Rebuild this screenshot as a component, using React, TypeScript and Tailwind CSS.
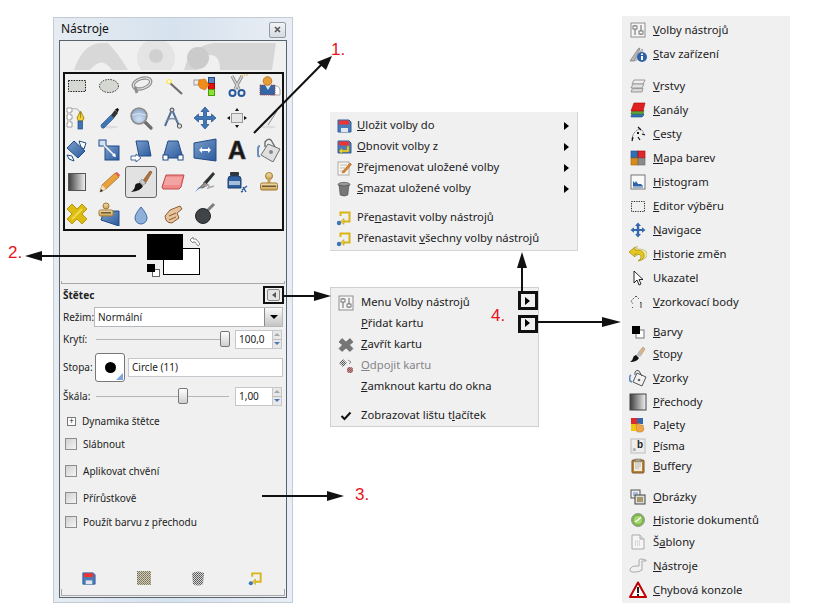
import type { ReactNode } from 'react'

function Ico({ s = 24, vb = 24, children }: { s?: number; vb?: number; children: ReactNode }) {
  return (
    <svg width={s} height={s} viewBox={`0 0 ${vb} ${vb}`} className="shrink-0">
      {children}
    </svg>
  )
}

// shared gradients and dither fills
function Defs() {
  return (
    <svg width="0" height="0" className="absolute">
      <defs>
        <linearGradient id="blue" x1="0" y1="0" x2="1" y2="1">
          <stop offset="0" stopColor="#7c9fcb" />
          <stop offset="1" stopColor="#2a5a9e" />
        </linearGradient>
        <linearGradient id="blend" x1="0" y1="0" x2="1" y2="0">
          <stop offset="0" stopColor="#3c3c3c" />
          <stop offset="1" stopColor="#f4f4f4" />
        </linearGradient>
        <linearGradient id="tan" x1="0" y1="0" x2="0" y2="1">
          <stop offset="0" stopColor="#f3e1ae" />
          <stop offset="1" stopColor="#c9a25a" />
        </linearGradient>
        <radialGradient id="lens" cx="0.5" cy="0.7" r="0.7">
          <stop offset="0" stopColor="#cfe0f5" />
          <stop offset="1" stopColor="#8fa9cb" />
        </radialGradient>
        <pattern id="dither" width="2" height="2" patternUnits="userSpaceOnUse">
          <rect width="2" height="2" fill="#d8d8d8" />
          <rect width="1" height="1" fill="#555" />
          <rect x="1" y="1" width="1" height="1" fill="#666" />
        </pattern>
        <pattern id="dither2" width="2" height="2" patternUnits="userSpaceOnUse">
          <rect width="2" height="2" fill="#d7cfa8" />
          <rect width="1" height="1" fill="#6b6b6b" />
          <rect x="1" y="1" width="1" height="1" fill="#8a8078" />
        </pattern>
      </defs>
    </svg>
  )
}

const TEXT_TOOL = 19

const toolIcons: ReactNode[] = [
  <rect x="3.5" y="6.5" width="17" height="11" fill="#d4d7d2" stroke="#111" strokeDasharray="1.4 1.2" />,
  <ellipse cx="12" cy="12" rx="9.5" ry="6.5" fill="#d4d7d2" stroke="#222" strokeDasharray="1.4 1.2" />,
  <g fill="none">
    <ellipse cx="13" cy="9.5" rx="9" ry="5" transform="rotate(-18 13 9.5)" stroke="#8d8d8d" strokeWidth="3.4" />
    <ellipse cx="13" cy="9.5" rx="9" ry="5" transform="rotate(-18 13 9.5)" stroke="#e4e4e4" strokeWidth="1.2" />
    <path d="M6 13l2 6" stroke="#8d8d8d" strokeWidth="2.8" />
  </g>,
  <g>
    <path d="M9 9l12 11" stroke="#6d6d6d" strokeWidth="2.2" />
    <circle cx="8" cy="7.5" r="2.6" fill="#fce94f" />
    <circle cx="8" cy="7.5" r="1.2" fill="#fff" />
  </g>,
  <g>
    <rect x="15.5" y="3.5" width="6" height="6" fill="#5a86c0" stroke="#204a87" />
    <rect x="15.5" y="9.5" width="6" height="6" fill="#e01010" stroke="#a40000" />
    <rect x="15.5" y="15.5" width="6" height="6" fill="#8ae234" stroke="#4e9a06" />
    <rect x="1" y="6" width="6" height="5" fill="#eee" stroke="#999" />
    <path d="M6 6l6-1 4 6-4 5-5-2-2-4z" fill="#f08c1a" stroke="#c96a08" strokeWidth=".6" />
  </g>,
  <g fill="none">
    <path d="M7 2l7 13M17 2l-7 13" stroke="#8f8f8f" strokeWidth="3.2" />
    <path d="M7 2l7 13M17 2l-7 13" stroke="#dadada" strokeWidth="1.2" />
    <path d="M15 2q3-1 8-1" stroke="#d69a2c" strokeDasharray="1.2 1" />
    <circle cx="7.5" cy="19" r="3" stroke="#2a5a9e" strokeWidth="2" />
    <circle cx="16.5" cy="19" r="3" stroke="#2a5a9e" strokeWidth="2" />
  </g>,
  <g>
    <path d="M14 12h6q3 1 3 4v5H14z" fill="#fff" stroke="#aaa" />
    <rect x="3" y="11" width="15" height="10" fill="#3465a4" stroke="#a44" strokeDasharray="1.2 1" />
    <path d="M8 11l3 5 3-5z" fill="#dfe7f2" />
    <circle cx="10.5" cy="7" r="4.3" fill="#e79c3a" stroke="#b97a1f" />
  </g>,
  <g fill="none">
    <path d="M2 2h5v4H5v3h2v4H5v3h2v5H2v-4h1v-4H2V9h1V6H2z" fill="#fff" stroke="#8a8a8a" strokeWidth=".8" />
    <path d="M6 3q7-2 9 4" stroke="#b5b5b5" strokeWidth="1.2" />
    <path d="M15.5 5l3.5 7-1.5 3h-4L12 12z" fill="#f2d43a" stroke="#a98a10" />
    <rect x="13" y="15" width="4.5" height="8" fill="#3d75b8" stroke="#204a87" strokeWidth=".7" />
    <path d="M15.5 6v6" stroke="#6b5a10" strokeWidth=".6" />
  </g>,
  <g>
    <ellipse cx="13" cy="21" rx="8" ry="1.4" fill="#ddd" />
    <path d="M4 19l10-10 3 3-10 10q-3 1-3-3" fill="#3f76b6" stroke="#204a87" strokeWidth=".6" />
    <path d="M14 9l4-5 3 3-4 5z" fill="#2e3436" />
    <path d="M18 3.5l2.5-1.5 1.5 1.5-1.5 3z" fill="#111" />
  </g>,
  <g>
    <path d="M16 16l6 6" stroke="#6d6d6d" strokeWidth="3.2" strokeLinecap="round" />
    <circle cx="10" cy="10" r="7.8" fill="url(#lens)" stroke="#8e8e8e" strokeWidth="1.8" />
    <path d="M3 9q7-3 14 0" stroke="#e6eef9" strokeWidth=".8" fill="none" />
  </g>,
  <g fill="none">
    <circle cx="11" cy="4" r="2" fill="#c9d4e2" stroke="#444" />
    <path d="M10 6L4 20M12 6l6 14" stroke="#4f6e98" strokeWidth="2" />
    <path d="M5 15q6-5 12 0" stroke="#7c8ba0" strokeWidth="1.5" />
    <circle cx="18.5" cy="20" r="2.2" fill="#ddd" stroke="#555" />
  </g>,
  <path d="M12 1l4 4.5h-2.5V10.5H18.5V8L23 12l-4.5 4V13.5H13.500V18.5H16L12 23l-4-4.5h2.5V13.5H5.5V16L1 12l4.5-4v2.5H10.5V5.5H8z" fill="#3f76b6" stroke="#204a87" strokeWidth=".7" />,
  <g fill="#111">
    <rect x="6.5" y="7.5" width="11" height="9" fill="#e6e6e6" stroke="#9a9a9a" />
    <path d="M12 2l2 3h-4zM12 22l2-3h-4zM2 12l3-2v4zM22 12l-3-2v4z" />
  </g>,
  <g fill="none">
    <ellipse cx="11" cy="21" rx="8" ry="1.5" fill="#ddd" />
    <path d="M4 20L20 5l-9 14" fill="#eee" stroke="#8a8a8a" />
  </g>,
  <g>
    <path d="M2 10l7-7 11 10-7 7z" fill="url(#blue)" stroke="#204a87" />
    <path d="M14 3l7 2-2 6-3-2zM2 17l5 1 2 5-5-2z" fill="#fff" stroke="#204a87" />
  </g>,
  <g>
    <rect x="8" y="8" width="14" height="14" fill="url(#blue)" stroke="#204a87" />
    <rect x="2" y="2" width="7" height="6" fill="#d5e1f0" stroke="#204a87" />
    <path d="M7 7l11 11" stroke="#fff" strokeWidth="1.5" />
    <path d="M19 19l-1-4-3 3z" fill="#fff" />
  </g>,
  <g>
    <path d="M7 3h12l3 15H10z" fill="url(#blue)" stroke="#204a87" />
    <path d="M2 18h5v-2l5 4-5 4v-2H2z" fill="#fff" stroke="#204a87" strokeWidth=".8" />
  </g>,
  <g>
    <path d="M7 3h10l5 17H2z" fill="url(#blue)" stroke="#204a87" />
    <rect x="2" y="17" width="5" height="5" fill="#fff" stroke="#204a87" />
    <rect x="17" y="17" width="5" height="5" fill="#fff" stroke="#204a87" />
  </g>,
  <g>
    <path d="M1 5l22-4v22L1 20z" fill="url(#blue)" stroke="#204a87" />
    <path d="M6 12l3-3v2h6V9l3 3-3 3v-2H9v2z" fill="#fff" />
  </g>,
  <span className="font-['Liberation_Sans',sans-serif] text-[25px] font-bold leading-[32px] text-[#151515] [-webkit-text-stroke:0.7px_#444]">A</span>,
  <g>
    <path d="M3 8q-2 0-2 3v6q0 2 2 1" fill="none" stroke="#6b8ebd" strokeWidth="2" />
    <path d="M11 6l12 5-7 13-12-7z" fill="#e0e0e0" stroke="#6d6d6d" />
    <path d="M8 9V4q3-4 6-2l4 7" fill="none" stroke="#6d6d6d" strokeWidth="1.4" />
    <circle cx="14" cy="14" r="2" fill="#888" />
  </g>,
  <rect x="3.5" y="3.5" width="17" height="17" fill="url(#blend)" stroke="#555" />,
  <g>
    <path d="M3 22l2-7L18 3l4 4L9 19z" fill="#e9a13b" stroke="#9a6a1c" strokeWidth=".7" />
    <path d="M18 3l2-1 3 3-1 2z" fill="#e25a5a" />
    <path d="M3 22l2-7 4 4z" fill="#f3dfbf" />
    <path d="M3 22l1-3 2 2z" fill="#222" />
  </g>,
  <g>
    <path d="M13 12L21 1l2 1-7 12z" fill="#b4703a" stroke="#7a4a1e" strokeWidth=".6" />
    <path d="M10 12l3-3 4 4-3 2z" fill="#c9c9c9" stroke="#777" strokeWidth=".5" />
    <path d="M11 13l3 3q-2 5-12 6 4-3 4-6t5-3z" fill="#151515" />
  </g>,
  <g>
    <path d="M5 5h18l-3 12-2 2H2l-1-2z" fill="#ef8a8a" stroke="#c44848" />
    <path d="M5 7h16l-2 8H3z" fill="#f4a3a3" />
  </g>,
  <g>
    <path d="M10 13L20 2l2 2-9 11z" fill="#2e3436" />
    <path d="M6 18l6-6 3 3-5 3z" fill="#8d8d8d" stroke="#444" strokeWidth=".5" />
    <path d="M12 16q6-3 3 2l6-2" fill="none" stroke="#aaa" strokeWidth="1.4" />
    <path d="M2 22l4-5 1 1z" fill="#4d86c6" />
  </g>,
  <g>
    <rect x="5" y="2" width="9" height="4" rx="1" fill="#30363a" />
    <path d="M3 9q0-3 3-3h7q3 0 3 3v9H3z" fill="#2f5f9e" stroke="#1d3d6e" />
    <rect x="4" y="11" width="11" height="4" fill="#a8bfdb" />
    <path d="M17 20l5-4M18 17l3 5M16 22l2-1" stroke="#2f5f9e" strokeWidth="1.4" />
  </g>,
  <g>
    <circle cx="12" cy="6" r="3.5" fill="url(#tan)" stroke="#a37a2f" />
    <rect x="10.5" y="9" width="3" height="4" fill="#c9a25a" />
    <rect x="3.5" y="13" width="17" height="7" rx="1.5" fill="url(#tan)" stroke="#a37a2f" />
    <rect x="5" y="15.5" width="14" height="1.5" fill="#6e5a35" />
  </g>,
  <g>
    <path d="M7 2l5 5 5-5 5 5-5 5 5 5-5 5-5-5-5 5-5-5 5-5-5-5z" fill="#dcbc10" stroke="#b9960b" />
    <path d="M7 17L17 7" stroke="#f0d94e" strokeWidth="2" />
  </g>,
  <g>
    <path d="M7 9h15v15L4 18z" fill="url(#blue)" stroke="#204a87" />
    <circle cx="9" cy="4" r="3" fill="url(#tan)" stroke="#a37a2f" />
    <rect x="2" y="8" width="14" height="6" rx="1.5" fill="url(#tan)" stroke="#a37a2f" />
    <rect x="4" y="10" width="10" height="1.5" fill="#6e5a35" />
  </g>,
  <path d="M12 5q6 7 6 11a6 6 0 0 1-12 0q0-4 6-11z" fill="#8fb0d8" stroke="#3c6aa8" />,
  <g>
    <path d="M9 8l10-4 2 3-5 4 2 5-7 5q-5 0-6-3l-1-4z" fill="#e6c39c" stroke="#8f5a34" />
    <path d="M8 14l7-3M8 18l7-3" stroke="#8f5a34" />
  </g>,
  <g>
    <path d="M13 10L21 2" stroke="#7e7e7e" strokeWidth="3" />
    <circle cx="10" cy="14" r="7.5" fill="#3f4447" stroke="#23282b" />
  </g>,
]

function Floppy({ s = 16 }: { s?: number }) {
  return (
    <Ico s={s} vb={16}>
      <path d="M2 2h11l2 2v10H2z" fill="#4c7cb8" stroke="#2f5f9e" />
      <rect x="3" y="2.5" width="10" height="4" fill="#e33" />
      <rect x="5" y="10" width="7" height="4" fill="#e2e6ec" />
    </Ico>
  )
}

function ResetArrow({ s = 16 }: { s?: number }) {
  return (
    <Ico s={s} vb={16}>
      <path d="M4.500 6V2.500h9v9H8" fill="none" stroke="#d8b515" strokeWidth="2" />
      <path d="M8 8.500L4.500 11.500 8 14.500z" fill="#eccd36" stroke="#b1920f" strokeWidth=".5" />
      <circle cx="3" cy="13" r="2.2" fill="#3d75b8" />
    </Ico>
  )
}

function Trash({ fill = '#777' }: { fill?: string }) {
  return (
    <Ico s={16} vb={16}>
      <ellipse cx="8" cy="3.5" rx="6" ry="2.2" fill="#999" stroke="#444" strokeWidth=".6" />
      <path d="M3 4l1.200 10q4 2 7.600 0L13 4q-5 2-10 0z" fill={fill} stroke="#444" strokeWidth=".6" />
    </Ico>
  )
}

function Sliders() {
  return (
    <Ico s={16} vb={16}>
      <rect x="1" y="1" width="14" height="14" fill="#f5f5f5" stroke="#8f8f8f" />
      <path d="M5 3v10M11 3v10" stroke="#666" />
      <rect x="3" y="4" width="4" height="3" fill="#fff" stroke="#555" strokeWidth=".8" />
      <rect x="9" y="9" width="4" height="3" fill="#fff" stroke="#555" strokeWidth=".8" />
    </Ico>
  )
}

const menuIcons: Record<string, ReactNode> = {
  options: <Sliders />,
  device: (
    <Ico s={18} vb={18}>
      <path d="M1 16L9 4l2-1-1 3-5 10z" fill="#b8b8b8" stroke="#777" strokeWidth=".7" />
      <path d="M5 16l8-12 1 1-6 10z" fill="#d5d5d5" stroke="#888" strokeWidth=".6" />
      <circle cx="13" cy="12" r="5" fill="#2e62a8" />
      <rect x="12" y="11" width="2" height="4" fill="#fff" />
      <rect x="12" y="8.5" width="2" height="1.5" fill="#fff" />
    </Ico>
  ),
  layers: (
    <Ico s={16} vb={16}>
      <path d="M4 2h11l-2 4H2z" fill="#efefef" stroke="#9a9a9a" />
      <path d="M3 6h11l-2 4H1z" fill="#e2e2e2" stroke="#9a9a9a" />
      <path d="M2.500 10.500H13L12 14H1z" fill="#d8d8d8" stroke="#9a9a9a" />
    </Ico>
  ),
  channels: (
    <Ico s={16} vb={16}>
      <path d="M2 11h11l1 2-2 2H1z" fill="#2f6fb5" stroke="#1d4a87" strokeWidth=".6" />
      <path d="M2 8.500h12l-1 3.500H1z" fill="#5ba33a" stroke="#3c7a1d" strokeWidth=".6" />
      <path d="M4 1h11l-2 8H1z" fill="#e02020" stroke="#a00" strokeWidth=".6" />
    </Ico>
  ),
  paths: (
    <Ico s={16} vb={16}>
      <path d="M2 13q1-8 8-10 3 1 4 6" fill="none" stroke="#333" strokeWidth=".8" strokeDasharray="1.2 1" />
      <path d="M8 1l3 3M3 11l-1 4M12 8l3 1M8 11l2 3" stroke="#111" strokeWidth="1.2" />
      <rect x="7" y="6" width="2" height="2" fill="#111" />
    </Ico>
  ),
  colormap: (
    <Ico s={16} vb={16}>
      <rect x="1" y="1" width="7" height="7" fill="#2f6fb5" stroke="#1d4a87" strokeWidth=".6" />
      <rect x="8" y="1" width="7" height="7" fill="#e02a2a" stroke="#a00" strokeWidth=".6" />
      <rect x="1" y="8" width="7" height="7" fill="#d98a1c" stroke="#a0640f" strokeWidth=".6" />
      <rect x="8" y="8" width="7" height="7" fill="#8a8a8a" stroke="#666" strokeWidth=".6" />
    </Ico>
  ),
  histogram: (
    <Ico s={16} vb={16}>
      <rect x="1" y="1" width="14" height="14" fill="#f8f8f8" stroke="#777" />
      <path d="M3 12V7l2 2 1-2 2 3 3 0 2 2z" fill="#2e62a8" />
      <path d="M3 13h10" stroke="#2e62a8" />
    </Ico>
  ),
  selection: (
    <Ico s={16} vb={16}>
      <rect x="1.5" y="3.5" width="13" height="10" fill="none" stroke="#222" strokeDasharray="1.2 1.2" />
    </Ico>
  ),
  nav: (
    <Ico s={16} vb={16}>
      <path d="M8 .5l3 3.500H9.200v3H12V5.200L15.500 8 12 10.800V9H9.200v3H11l-3 3.500L5 12h1.800V9H4v1.800L.5 8 4 5.200V7h2.800V4H5z" fill="#3467ab" />
    </Ico>
  ),
  undo: (
    <Ico s={18} vb={18}>
      <path d="M8 1L2 6l6 5V8q6 0 6 3 0 3-4 4h2q7-2 6-7-1-4-10-4z" fill="#efeab0" stroke="#b3ad5c" strokeWidth=".7" />
      <path d="M6 2L0 7l6 5V9q6 0 6 3t-3 4q7-1 6-7-1-4-9-4z" fill="#e6c71e" stroke="#a68d0c" strokeWidth=".7" />
    </Ico>
  ),
  pointer: (
    <Ico s={16} vb={16}>
      <path d="M4 1v12l3-3 2 5 2-1-2-4.500h4z" fill="#fff" stroke="#111" strokeWidth=".9" />
    </Ico>
  ),
  sample: (
    <Ico s={16} vb={16}>
      <path d="M6 2L1 7l2 3M6 2l3 3M2 13l1 1" fill="none" stroke="#555" strokeDasharray="1.5 1" />
      <path d="M11 8v6M10 9l1-1" stroke="#444" />
    </Ico>
  ),
  colors: (
    <Ico s={16} vb={16}>
      <rect x="6" y="6" width="8" height="8" fill="#fff" stroke="#777" />
      <rect x="2" y="2" width="8" height="8" fill="#000" />
    </Ico>
  ),
  brushes: (
    <Ico s={18} vb={18}>
      <path d="M9 8l5-6 2 2-4 6z" fill="#d9b58a" stroke="#9d7a4e" strokeWidth=".5" />
      <path d="M7 10l3-3 3 3-2 2z" fill="#bbb" />
      <path d="M7 10l3 3q-2 4-9 4 3-2 3-4t3-3z" fill="#111" />
    </Ico>
  ),
  patterns: (
    <Ico s={18} vb={18}>
      <path d="M2 6q-2 1-1 6l2 1" fill="none" stroke="#5c86c0" strokeWidth="1.5" />
      <path d="M8 4l9 4-4 9-9-4z" fill="#f2f2f2" stroke="#555" />
      <path d="M6 6V3q2-3 4-1l3 5" fill="none" stroke="#555" />
      <circle cx="10" cy="11" r="1.3" fill="#666" />
    </Ico>
  ),
  gradients: (
    <Ico s={18} vb={18}>
      <rect x="1" y="1" width="16" height="16" fill="url(#blend)" stroke="#444" />
    </Ico>
  ),
  palettes: (
    <Ico s={16} vb={16}>
      <rect x="1" y="1" width="6" height="6" fill="#e02a2a" />
      <rect x="7" y="1" width="6" height="6" fill="#3467ab" />
      <rect x="1" y="7" width="6" height="7" fill="#f1c40f" />
      <path d="M6 7l2 0 1-1 1 2 3 0 1 5-2 2H7z" fill="#f0a34a" stroke="#b97a1f" strokeWidth=".5" />
    </Ico>
  ),
  fonts: (
    <Ico s={16} vb={16}>
      <rect x="1" y="1" width="14" height="14" fill="#eee" stroke="#bbb" />
      <text x="2.5" y="13" fontFamily="Liberation Sans, sans-serif" fontSize="6" fill="#888">a</text>
      <text x="7" y="10" fontFamily="Liberation Sans, sans-serif" fontWeight="700" fontSize="10" fill="#222">b</text>
    </Ico>
  ),
  buffers: (
    <Ico s={16} vb={16}>
      <rect x="2" y="2" width="12" height="13" rx="1" fill="#b8853f" stroke="#7a5520" />
      <rect x="4" y="4" width="8" height="9" fill="#f0eadd" />
      <rect x="5" y="1" width="6" height="3" fill="#a8a08a" stroke="#6e6650" strokeWidth=".5" />
      <path d="M5 6h6M5 8h6M5 10h4" stroke="#aaa" strokeWidth=".7" />
    </Ico>
  ),
  images: (
    <Ico s={16} vb={16}>
      <rect x="1" y="1" width="9" height="8" fill="#eee" stroke="#555" />
      <rect x="3" y="3" width="5" height="4" fill="#a8c0dc" />
      <rect x="5" y="6" width="10" height="9" fill="#ddd" stroke="#444" />
      <rect x="7" y="8" width="6" height="5" fill="#a89968" />
    </Ico>
  ),
  docHistory: (
    <Ico s={16} vb={16}>
      <circle cx="8" cy="8" r="6.5" fill="#7ab648" stroke="#9a9a9a" />
      <circle cx="8" cy="8" r="4" fill="#a5d671" />
      <path d="M8 8l3-3M8 8L5 10" stroke="#fff" strokeWidth="1.2" />
    </Ico>
  ),
  templates: (
    <Ico s={16} vb={16}>
      <path d="M2 1h8l4 4v10H2z" fill="#f5f5f5" stroke="#aaa" />
      <path d="M10 1v4h4" fill="#ddd" stroke="#aaa" />
      <path d="M5 7h6M5 9h6M5 11h6" stroke="#bbb" strokeDasharray="1 1" />
    </Ico>
  ),
  tools: (
    <Ico s={18} vb={18}>
      <path d="M1 12q2-3 5-3h4V4q0-2 2-2t4 1h1v1l-4 0v9q-3 2-6 2H3q-3-1-2-3z" fill="#f0f0f0" stroke="#aaa" />
    </Ico>
  ),
  warning: (
    <Ico s={18} vb={18}>
      <path d="M9 1.5L17 16H1z" fill="#fff" stroke="#c00000" strokeWidth="2" strokeLinejoin="round" />
      <rect x="8" y="6" width="2" height="6" fill="#222" />
      <rect x="8" y="13" width="2" height="2" fill="#222" />
    </Ico>
  ),
  save: <Floppy />,
  restore: (
    <Ico s={16} vb={16}>
      <path d="M2 2h11l2 2v10H2z" fill="#4c7cb8" stroke="#2f5f9e" />
      <rect x="3" y="2.5" width="10" height="4" fill="#e33" />
      <path d="M11 7v4H6V9l-3 3 3 3v-2h7V7z" fill="#ecd136" stroke="#a68d0c" strokeWidth=".5" />
    </Ico>
  ),
  rename: (
    <Ico s={16} vb={16}>
      <rect x="2" y="2" width="11" height="13" fill="#faf7ec" stroke="#aaa" />
      <path d="M4 5h7M4 8h5M4 11h4" stroke="#bbb" />
      <path d="M7 11l7-8 1.500 1.500-7 8L6 13z" fill="#e0812a" stroke="#9a5515" strokeWidth=".5" />
    </Ico>
  ),
  trash: <Trash />,
  reset: <ResetArrow />,
  close: (
    <Ico s={16} vb={16}>
      <path d="M4 1.500L8 5l4-3.500L15 5l-3.500 3 3.500 3.500-3 3L8 11l-4 3.500-3-3L4.500 8 1 5z" fill="#767676" stroke="#5c5c5c" strokeWidth=".6" />
    </Ico>
  ),
  detach: (
    <Ico s={16} vb={16}>
      <path d="M1 5l4-4 4 4-4 4z" fill="url(#dither)" />
      <path d="M10 2l3 2-2 2" fill="none" stroke="#888" />
      <circle cx="12" cy="12" r="3" fill="#b84a4a" />
      <circle cx="12" cy="12" r="3" fill="url(#dither)" opacity=".5" />
    </Ico>
  ),
  check: (
    <Ico s={16} vb={16}>
      <path d="M3.500 8l3 3 6-6.500" fill="none" stroke="#111" strokeWidth="2" />
    </Ico>
  ),
}

function Mnemonic({ text }: { text: string }) {
  const i = text.indexOf('_')
  if (i < 0) return <>{text}</>
  return (
    <>
      {text.slice(0, i)}
      <u className="underline">{text[i + 1]}</u>
      {text.slice(i + 2)}
    </>
  )
}

function MenuRow({
  icon,
  label,
  arrow,
  disabled,
  className = 'h-[21px]',
  iconClass = 'w-[27px]',
}: {
  icon?: string
  label: string
  arrow?: boolean
  disabled?: boolean
  className?: string
  iconClass?: string
}) {
  return (
    <div className={`flex items-center ${className}`}>
      <div className={`flex shrink-0 justify-center ${iconClass}`}>{icon && menuIcons[icon]}</div>
      <span className={`whitespace-nowrap ${disabled ? 'text-[#85858a]' : 'text-[#1c1c24]'}`}>
        <Mnemonic text={label} />
      </span>
      {arrow && <span className="ml-auto h-0 w-0 border-y-[4px] border-l-[5px] border-y-transparent border-l-black" />}
    </div>
  )
}

const dockItems: { icon: string; label: string; cls?: string }[] = [
  { icon: 'options', label: '_Volby nástrojů' },
  { icon: 'device', label: '_Stav zařízení' },
  { icon: 'layers', label: '_Vrstvy', cls: 'mt-2' },
  { icon: 'channels', label: '_Kanály' },
  { icon: 'paths', label: '_Cesty' },
  { icon: 'colormap', label: '_Mapa barev' },
  { icon: 'histogram', label: '_Histogram' },
  { icon: 'selection', label: '_Editor výběru' },
  { icon: 'nav', label: '_Navigace' },
  { icon: 'undo', label: '_Historie změn' },
  { icon: 'pointer', label: 'Ukazatel' },
  { icon: 'sample', label: '_Vzorkovací body' },
  { icon: 'colors', label: '_Barvy', cls: 'mt-[6px]' },
  { icon: 'brushes', label: '_Stopy', cls: '-mt-[2px]' },
  { icon: 'patterns', label: '_Vzorky' },
  { icon: 'gradients', label: '_Přechody' },
  { icon: 'palettes', label: 'Pa_lety', cls: '-mt-px' },
  { icon: 'fonts', label: '_Písma', cls: '-mt-[3px]' },
  { icon: 'buffers', label: '_Buffery', cls: '-mt-1' },
  { icon: 'images', label: '_Obrázky', cls: 'mt-[7px]' },
  { icon: 'docHistory', label: '_Historie dokumentů', cls: '-mt-px' },
  { icon: 'templates', label: 'Š_ablony', cls: '-mt-[2px]' },
  { icon: 'tools', label: '_Nástroje' },
  { icon: 'warning', label: '_Chybová konzole' },
]

function Spin({ value }: { value: string }) {
  return (
    <div className="ml-[6px] flex h-[19px] w-[47px] shrink-0 border border-[#c4c8cc] bg-white">
      <span className="flex-1 pl-[3px] leading-[17px]">{value}</span>
      <div className="flex w-[9px] flex-col border-l border-[#c4c8cc] bg-[#e8e8e8]">
        <span className="flex flex-1 items-center justify-center border-b border-[#bbb]">
          <span className="h-0 w-0 border-x-[3px] border-b-[3px] border-x-transparent border-b-[#a0a8b0]" />
        </span>
        <span className="flex flex-1 items-center justify-center">
          <span className="h-0 w-0 border-x-[3px] border-t-[3px] border-x-transparent border-t-[#4f79b5]" />
        </span>
      </div>
    </div>
  )
}

function Slider({ label, pos, value }: { label: string; pos: string; value: string }) {
  return (
    <div className="flex h-5 items-center">
      <span className="w-[33px] shrink-0">{label}</span>
      <div className="relative h-px w-[133px] bg-[#b5b5b5]">
        <span className={`absolute -top-2 h-4 w-[10px] rounded-[2px] border border-[#777] bg-linear-to-b from-white to-[#cfcfcf] ${pos}`} />
      </div>
      <Spin value={value} />
    </div>
  )
}

function Check({ label, cls }: { label: string; cls: string }) {
  return (
    <div className={`flex h-4 items-center ${cls}`}>
      <span className="ml-[2px] mr-[6px] h-3 w-3 shrink-0 border border-[#8e8e8e] bg-linear-to-br from-[#d0d0d0] to-[#f5f5f5]" />
      <span>{label}</span>
    </div>
  )
}

function Groove({ className = '' }: { className?: string }) {
  return <div className={`border-b border-l border-r border-[#a8a8a8] ${className}`} />
}

function ToolWindow() {
  return (
    <div className="absolute left-[53px] top-[17px] flex h-[586px] w-[240px] flex-col border border-[#c3ccd6] bg-linear-to-r from-[#e6ecf2] via-[#d6e2ee] to-[#e9eef4] px-[5px] pb-[4px] font-['Noto_Sans',sans-serif] text-[10px] text-[#222]">
      <div className="flex h-[22px] shrink-0 items-center justify-between">
        <span className="pl-[2px] text-[12px] text-[#111]">Nástroje</span>
        <span className="mr-[1px] mt-[1px] flex h-4 w-[17px] items-center justify-center rounded-[2px] border border-[#8f9aa6] bg-linear-to-b from-[#f2f4f6] to-[#d5dbe2]">
          <svg width="7" height="7" viewBox="0 0 7 7">
            <path d="M1 1l5 5M6 1l-5 5" stroke="#555" strokeWidth="1.6" />
          </svg>
        </span>
      </div>
      <div className="relative flex flex-1 flex-col border border-[#57636f] bg-[#f0f0f0]">
        {/* watermark behind the toolbox */}
        <div className="h-[29px] shrink-0 overflow-hidden pl-3">
          <svg width="204" height="29" viewBox="0 0 204 29">
            <path d="M2 29Q10 4 28 2h8q10 10 20 27H40Q30 14 18 29z" fill="#d8d8d8" />
            <circle cx="84" cy="17" r="19" fill="#e4e4e4" />
            <circle cx="84" cy="15" r="7" fill="#d0d0d0" />
            <path d="M112 29q6-24 30-27h62l-4 27h-52q0-15-10-15t-12 15z" fill="#d6d6d6" />
            <circle cx="126" cy="17" r="11" fill="#cbcbcb" />
          </svg>
        </div>
        <div className="ml-px grid w-[224px] shrink-0 grid-cols-7 auto-rows-[32px]">
          {toolIcons.map((icon, i) => (
            <div
              key={i}
              className={`flex items-center justify-center ${i === 23 ? 'rounded-[3px] border border-[#666] bg-[#e2e2e2]' : ''}`}
            >
              {i === TEXT_TOOL ? icon : <Ico>{icon}</Ico>}
            </div>
          ))}
        </div>

        {/* foreground and background colors */}
        <div className="relative h-[50px] shrink-0">
          <div className="absolute left-[103px] top-[18px] h-[27px] w-[37px] border border-black bg-white" />
          <div className="absolute left-[87px] top-1 h-[26px] w-9 bg-black" />
          <svg className="absolute left-[128px] top-[5px]" width="13" height="13" viewBox="0 0 13 13">
            <path d="M2 5l3-3v2h3l4 5-2 2-3-4H5v1z" fill="#fff" stroke="#888" />
          </svg>
          <div className="absolute left-[92px] top-[39px] h-[8px] w-[8px] border border-[#666] bg-white" />
          <div className="absolute left-[87px] top-[34px] h-[8px] w-[8px] bg-black" />
        </div>

        <Groove className="mx-[1px] mt-[1px] h-[3px] shrink-0" />

        <div className="flex flex-1 flex-col pl-[3px] pr-[3px] pt-[2px]">
          <div className="flex h-[18px] items-center justify-between">
            <span className="font-bold">Štětec</span>
            <span className="mr-[3px] flex h-[12px] w-[13px] items-center justify-center rounded-[2px] border border-[#888] bg-[#e4e4e4]">
              <span className="h-0 w-0 border-y-[3px] border-r-[4px] border-y-transparent border-r-[#555]" />
            </span>
          </div>
          <div className="mt-[3px] flex h-5 items-center">
            <span className="w-[31px] shrink-0">Režim:</span>
            <div className="flex h-5 flex-1 border border-[#b5b9bd] bg-white">
              <span className="flex-1 pl-[3px] leading-[18px]">Normální</span>
              <span className="flex w-[18px] items-center justify-center border-l border-[#888] bg-linear-to-b from-[#fafafa] to-[#c4c4c4]">
                <span className="h-0 w-0 border-x-[4px] border-t-[4px] border-x-transparent border-t-black" />
              </span>
            </div>
          </div>
          <div className="mt-[2px]">
            <Slider label="Krytí:" pos="left-[124px]" value="100,0" />
          </div>
          <div className="mt-1 flex h-[29px] items-center">
            <span className="w-[32px] shrink-0">Stopa:</span>
            <div className="relative flex h-[29px] w-[30px] shrink-0 items-center justify-center rounded-[3px] border border-[#777] bg-white">
              <span className="h-[11px] w-[11px] rounded-full bg-black" />
              <span className="absolute bottom-px right-px h-0 w-0 border-b-[7px] border-l-[7px] border-b-[#7ba3dc] border-l-transparent" />
            </div>
            <div className="ml-[3px] h-[19px] flex-1 border border-[#c4c8cc] bg-white pl-[3px] leading-[17px]">Circle (11)</div>
          </div>
          <div className="mt-1">
            <Slider label="Škála:" pos="left-[82px]" value="1,00" />
          </div>
          <div className="mt-[7px] flex h-4 items-center pl-1">
            <span className="mr-[6px] flex h-[9px] w-[9px] items-center justify-center border border-[#777] bg-white text-[8px] leading-none">+</span>
            <span>Dynamika štětce</span>
          </div>
          <Check label="Slábnout" cls="mt-[7px]" />
          <Check label="Aplikovat chvění" cls="mt-[11px]" />
          <Check label="Přírůstkově" cls="mt-[11px]" />
          <Check label="Použít barvu z přechodu" cls="mt-2" />
          <div className="mt-auto flex h-4 items-center pl-[18px]">
            <div className="w-[56px]"><Floppy s={15} /></div>
            <div className="w-[54px]">
              <svg width="14" height="14"><rect width="14" height="14" fill="url(#dither2)" /></svg>
            </div>
            <div className="w-[57px]">
              <svg width="14" height="15" viewBox="0 0 14 15">
                <path d="M1 2q6-3 12 0l-1 11q-5 3-10 0z" fill="url(#dither)" />
              </svg>
            </div>
            <ResetArrow s={15} />
          </div>
          <Groove className="-mx-[2px] mb-[1px] mt-[3px] h-[7px] shrink-0" />
        </div>
      </div>
    </div>
  )
}

// red numbers and black arrows laid over the screenshots
function Annotations() {
  return (
    <>
      <div className="absolute left-[63px] top-[72px] h-[159px] w-[221px] border-2 border-[#111]" />
      <div className="absolute left-[263px] top-[286px] h-[18px] w-[21px] border-2 border-[#111]" />
      <div className="absolute left-[518px] top-[291px] h-[19px] w-[20px] border-[3px] border-[#111]" />
      <div className="absolute left-[518px] top-[315px] h-[18px] w-[20px] border-[3px] border-[#111]" />
      <svg className="absolute left-0 top-0" width="829" height="611" viewBox="0 0 829 611">
        <g stroke="#111" strokeWidth="2" fill="#111">
          <path d="M254 133L322 64" />
          <path d="M332 56L326 70 317 62z" stroke="none" />
          <path d="M136 256H40" />
          <path d="M25 256L42 251V261z" stroke="none" />
          <path d="M262 496H328" />
          <path d="M344 496L327 491V501z" stroke="none" />
          <path d="M283 296H316" />
          <path d="M331 296L314 291V301z" stroke="none" />
          <path d="M522 291V266" />
          <path d="M522 252L517 268H527z" stroke="none" />
          <path d="M537 322H604" />
          <path d="M621 322L602 317V327z" stroke="none" />
        </g>
      </svg>
      <span className="absolute left-[331px] top-[41px] font-['Liberation_Sans',sans-serif] text-[17px] leading-[18px] text-[#e8141c]">1.</span>
      <span className="absolute left-[8px] top-[244px] font-['Liberation_Sans',sans-serif] text-[17px] leading-[18px] text-[#e8141c]">2.</span>
      <span className="absolute left-[355px] top-[486px] font-['Liberation_Sans',sans-serif] text-[17px] leading-[18px] text-[#e8141c]">3.</span>
      <span className="absolute left-[491px] top-[307px] font-['Liberation_Sans',sans-serif] text-[17px] leading-[18px] text-[#e8141c]">4.</span>
    </>
  )
}

export default function App() {
  return (
    <div className="relative h-[611px] w-[829px] overflow-hidden bg-white">
      <Defs />
      <ToolWindow />

      <div className="absolute left-[330px] top-[112px] flex h-[139px] w-[248px] flex-col border-b border-r border-[#d4d4d4] bg-[#f0f0f0] pr-[8px] pt-[3px] font-['Noto_Sans',sans-serif] text-[11.25px]">
        <MenuRow icon="save" label="_Uložit volby do" arrow />
        <MenuRow icon="restore" label="_Obnovit volby z" arrow />
        <MenuRow icon="rename" label="_Přejmenovat uložené volby" arrow />
        <MenuRow icon="trash" label="_Smazat uložené volby" arrow />
        <div className="h-2" />
        <MenuRow icon="reset" label="Pře_nastavit volby nástrojů" />
        <MenuRow icon="reset" label="Přenastavit _všechny volby nástrojů" />
      </div>

      <div className="absolute left-[330px] top-[287px] flex h-[140px] w-[209px] flex-col border border-[#d0d0d0] bg-[#f0f0f0] pt-[4px] font-['Noto_Sans',sans-serif] text-[11.25px]">
        <MenuRow icon="options" label="Menu Volby nástrojů" iconClass="w-[30px]" />
        <MenuRow label="_Přidat kartu" iconClass="w-[30px]" />
        <MenuRow icon="close" label="_Zavřít kartu" iconClass="w-[30px]" />
        <MenuRow icon="detach" label="_Odpojit kartu" iconClass="w-[30px]" disabled />
        <MenuRow label="_Zamknout kartu do okna" iconClass="w-[30px]" />
        <div className="h-2" />
        <MenuRow icon="check" label="Zobrazovat lištu t_lačítek" iconClass="w-[30px]" />
        {/* submenu arrows */}
        <span className="absolute left-[194px] top-[9px] z-10 h-0 w-0 border-y-[4px] border-l-[5px] border-y-transparent border-l-black" />
        <span className="absolute left-[194px] top-[31px] z-10 h-0 w-0 border-y-[4px] border-l-[5px] border-y-transparent border-l-black" />
      </div>

      <div className="absolute left-[622px] top-[16px] flex h-[587px] w-[168px] flex-col bg-[#f0f0f0] pt-[2px] font-['Noto_Sans',sans-serif] text-[11.25px]">
        {dockItems.map((item) => (
          <MenuRow key={item.label} icon={item.icon} label={item.label} className={`h-6 ${item.cls ?? ''}`} iconClass="w-[31px]" />
        ))}
      </div>

      <Annotations />
    </div>
  )
}
